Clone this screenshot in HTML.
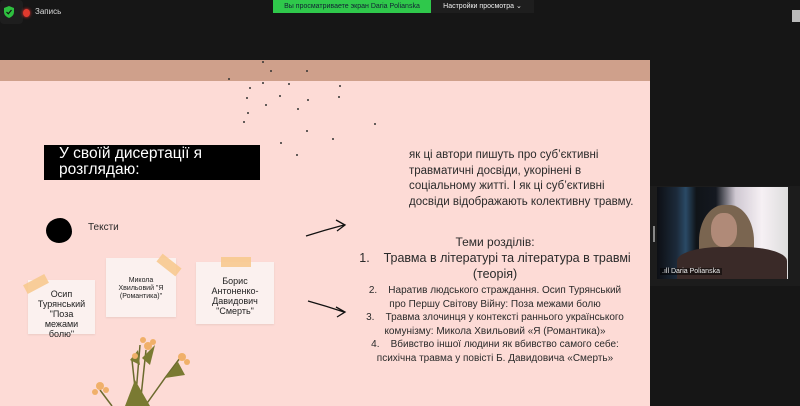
<!DOCTYPE html>
<html><head><meta charset="utf-8"><style>
*{margin:0;padding:0;box-sizing:border-box}
body{width:800px;height:406px;background:#161616;position:relative;overflow:hidden;font-family:"Liberation Sans","DejaVu Sans",sans-serif}
.a{position:absolute}
.slide{left:0;top:60px;width:650px;height:346px;background:#fddbd6;overflow:hidden}
.band{left:0;top:0;width:650px;height:21px;background:#cfa08b}
.note{background:#fbf1ef;font-size:9px;color:#222;text-align:center;line-height:10px;box-shadow:0 1px 2px rgba(0,0,0,.08)}
.tape{background:#f7c98f;opacity:.9}
.dot{width:2px;height:2px;background:#333;border-radius:1px}
.rt{color:#2a2a2a;font-family:"Liberation Sans",sans-serif;white-space:nowrap}
</style></head><body>
<div class="a" style="left:0;top:0;width:23px;height:24px;background:#1e1e1e;border-radius:4px"></div>
<svg class="a" style="left:4px;top:6px" width="10" height="12" viewBox="0 0 10 12"><path d="M5 0L10 2V6Q10 10 5 12Q0 10 0 6V2Z" fill="#2ebf3f"/><path d="M2.5 6L4.3 7.8L7.5 4" stroke="#111" stroke-width="1.2" fill="none"/></svg>
<div class="a" style="left:23px;top:9px;width:7px;height:8px;border-radius:50%;background:#e03a2e;box-shadow:0 0 3px #f33"></div>
<div class="a" style="left:35px;top:7px;font-size:8px;color:#ddd">Запись</div>
<div class="a" style="left:273px;top:0;width:158px;height:13px;background:#2fc84b;color:#123;font-size:7px;line-height:13px;text-align:center">Вы просматриваете экран Daria Polianska</div>
<div class="a" style="left:431px;top:0;width:103px;height:13px;background:#1e1e1e;color:#eee;font-size:7px;line-height:13px;text-align:center">Настройки просмотра ⌄</div>
<div class="a" style="left:792px;top:10px;width:8px;height:12px;background:#bbb"></div>

<div class="a slide">
 <div class="a band"></div>
 <div class="a dot" style="left:262px;top:1px"></div><div class="a dot" style="left:228px;top:18px"></div><div class="a dot" style="left:270px;top:10px"></div>
 <div class="a dot" style="left:249px;top:27px"></div><div class="a dot" style="left:246px;top:37px"></div><div class="a dot" style="left:262px;top:22px"></div>
 <div class="a dot" style="left:247px;top:52px"></div><div class="a dot" style="left:265px;top:44px"></div><div class="a dot" style="left:288px;top:23px"></div>
 <div class="a dot" style="left:279px;top:35px"></div><div class="a dot" style="left:297px;top:48px"></div><div class="a dot" style="left:306px;top:10px"></div>
 <div class="a dot" style="left:338px;top:36px"></div><div class="a dot" style="left:339px;top:25px"></div><div class="a dot" style="left:306px;top:70px"></div>
 <div class="a dot" style="left:332px;top:78px"></div><div class="a dot" style="left:243px;top:61px"></div><div class="a dot" style="left:280px;top:82px"></div>
 <div class="a dot" style="left:374px;top:63px"></div><div class="a dot" style="left:307px;top:39px"></div><div class="a dot" style="left:296px;top:94px"></div>

 <div class="a" style="left:44px;top:85px;width:216px;height:35px;background:#000;color:#fff;font-size:15.5px;line-height:16px;padding:1px 0 0 15px">У своїй дисертації я<br>розглядаю:</div>

 <div class="a" style="left:46px;top:158px;width:26px;height:25px;background:#000;border-radius:55% 45% 50% 50%/50% 55% 45% 50%"></div>
 <div class="a rt" style="left:88px;top:162px;font-size:10px">Тексти</div>

 <div class="a note" style="left:28px;top:220px;width:67px;height:54px;padding-top:9px">Осип<br>Турянський<br>"Поза<br>межами<br>болю"</div>
 <div class="a tape" style="left:24px;top:219px;width:24px;height:10px;transform:rotate(-28deg)"></div>
 <div class="a note" style="left:106px;top:198px;width:70px;height:59px;padding-top:19px;font-size:7px;line-height:8px">Микола<br>Хвильовий "Я<br>(Романтика)"</div>
 <div class="a tape" style="left:157px;top:200px;width:24px;height:10px;transform:rotate(38deg)"></div>
 <div class="a note" style="left:196px;top:202px;width:78px;height:62px;padding-top:14px;font-size:9px">Борис<br>Антоненко-<br>Давидович<br>"Смерть"</div>
 <div class="a tape" style="left:221px;top:197px;width:30px;height:10px"></div>

 <svg class="a" style="left:0;top:0" width="650" height="346">
  <path d="M306 176Q325 170 344 165M336 160L345 165L337 171" stroke="#111" stroke-width="1.3" fill="none"/>
  <path d="M308 241Q326 246 344 252M336 247L345 252L337 257" stroke="#111" stroke-width="1.3" fill="none"/>
  <g stroke="#6b6a2e" stroke-width="1.5" fill="none"><path d="M112 346L100 330"/><path d="M135 346L140 285"/><path d="M140 346L146 290"/><path d="M145 346L165 318L180 298"/><path d="M137 346L132 300"/></g>
  <g fill="#7a7a32"><path d="M125 346L135 320L150 346Z"/><path d="M142 298L155 285L150 305Z"/><path d="M165 318L178 302L185 315Z"/><path d="M130 300L138 290L140 305Z"/></g>
  <g fill="#f0b06a"><circle cx="100" cy="326" r="4"/><circle cx="95" cy="332" r="3"/><circle cx="106" cy="330" r="3"/><circle cx="148" cy="286" r="4"/><circle cx="143" cy="280" r="3"/><circle cx="153" cy="282" r="3"/><circle cx="182" cy="297" r="4"/><circle cx="187" cy="302" r="3"/><circle cx="135" cy="296" r="3"/></g>
 </svg>

 <div class="a rt" style="left:409px;top:88px;font-size:11.5px;line-height:15.5px">як ці автори пишуть про суб’єктивні<br>травматичні досвіди, укорінені в<br>соціальному житті. І як ці суб’єктивні<br>досвіди відображають колективну травму.</div>

 <div class="a rt" style="left:345px;top:174px;width:300px;text-align:center;font-size:12px;line-height:16px">
  Теми розділів:<br>
  <span style="font-size:12.5px">1.&nbsp;&nbsp;&nbsp; Травма в літературі та література в травмі<br>(теорія)</span><br>
  <span style="font-size:10px;line-height:13.6px;display:block;margin-top:2px">2.&nbsp;&nbsp;&nbsp; Наратив людського страждання. Осип Турянський<br>про Першу Світову Війну: Поза межами болю<br>3.&nbsp;&nbsp;&nbsp; Травма злочинця у контексті раннього українського<br>комунізму: Микола Хвильовий «Я (Романтика)»<br>4.&nbsp;&nbsp;&nbsp; Вбивство іншої людини як вбивство самого себе:<br>психічна травма у повісті Б. Давидовича «Смерть»</span>
 </div>
</div>

<div class="a" style="left:650px;top:186px;width:150px;height:100px;background:#1c1c1c"></div>
<div class="a" style="left:653px;top:226px;width:2px;height:16px;background:#888"></div>
<div class="a" style="left:657px;top:187px;width:131px;height:92px;background:linear-gradient(90deg,#0d0f14 0,#1c2a3a 15%,#2a4a66 22%,#101418 30%,#141820 45%,#cfc8d2 60%,#f6f0f4 80%,#ddd 100%);overflow:hidden">
 <div class="a" style="left:42px;top:18px;width:55px;height:80px;background:#7a6550;border-radius:45% 45% 10% 10%"></div>
 <div class="a" style="left:54px;top:26px;width:26px;height:34px;background:#b08a78;border-radius:45%"></div>
 <div class="a" style="left:20px;top:60px;width:110px;height:35px;background:#3a2a28;border-radius:40% 40% 0 0"></div>
</div>
<div class="a" style="left:660px;top:268px;font-size:7px;color:#eee;background:rgba(0,0,0,.5);padding:0 2px">.ıll Daria Polianska</div>
</body></html>
